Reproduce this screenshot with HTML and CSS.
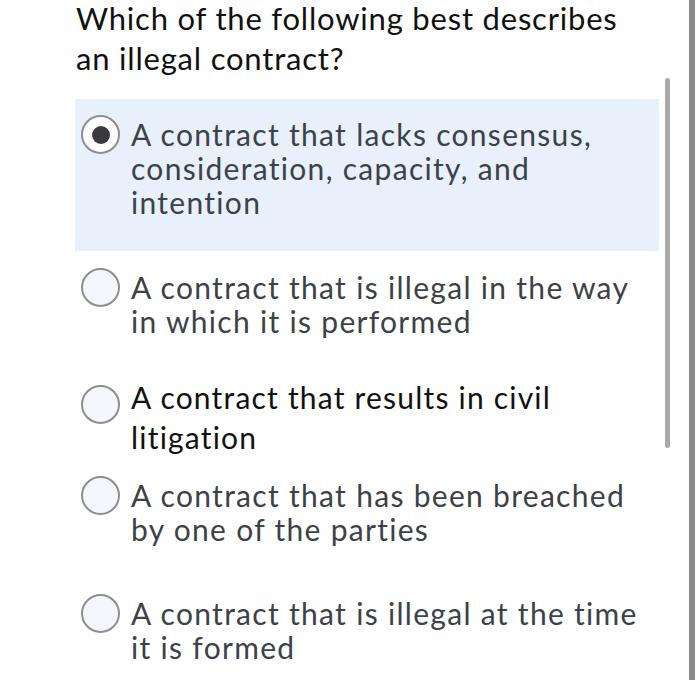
FILE: index.html
```html
<!DOCTYPE html>
<html lang="en">
<head>
<meta charset="utf-8">
<title>Question</title>
<link rel="stylesheet" href="styles.css">
</head>
<body>
<div class="frame">
  <div class="content">
    <h1 class="question">Which of the following best describes<br>an illegal contract?</h1>
    <div class="options">
      <div class="option option--selected">
        <span class="radio radio--checked"></span>
        <span class="label">A contract that lacks consensus,<br>consideration, capacity, and<br>intention</span>
      </div>
      <div class="option option--second">
        <span class="radio"></span>
        <span class="label">A contract that is illegal in the way<br>in which it is performed</span>
      </div>
      <div class="option option--third">
        <span class="radio radio--low"></span>
        <span class="label label--dark">A contract that results in civil<br>litigation</span>
      </div>
      <div class="option option--fourth">
        <span class="radio"></span>
        <span class="label">A contract that has been breached<br>by one of the parties</span>
      </div>
      <div class="option option--fifth">
        <span class="radio"></span>
        <span class="label">A contract that is illegal at the time<br>it is formed</span>
      </div>
    </div>
  </div>
  <div class="scroll-thumb"></div>
</div>
</body>
</html>
```

FILE: styles.css
```css
html, body {
  margin: 0;
  padding: 0;
  background: #ffffff;
}

.frame {
  position: relative;
  width: 689px;
  height: 680px;
  border-right: 6px solid #8a8a8a;
  overflow: hidden;
}

.content {
  padding-left: 75px;
  width: 584px;
}

.question {
  margin: -2px 0 0 1px;
  font-family: "Lato", "Liberation Sans", sans-serif;
  font-weight: 400;
  font-size: 31px;
  letter-spacing: 0.8px;
  line-height: 40px;
  color: #111111;
  white-space: nowrap;
}

.options {
  margin-top: 21px;
  display: flex;
  flex-direction: column;
}

.option {
  display: flex;
  align-items: flex-start;
  gap: 11px;
  padding: 18px 6px 0;
}

.option--selected {
  background: #e7f0fb;
  padding-bottom: 32px;
}

.option--second { margin-top: 1px; }
.option--third { margin-top: 21px; }
.option--fourth { margin-top: 3px; }
.option--fifth { margin-top: 32px; }

.radio {
  flex: none;
  box-sizing: border-box;
  width: 39px;
  height: 39px;
  margin-top: -2px;
  border: 2px solid #8e8e8e;
  border-radius: 50%;
  background: #f4f6fb;
  display: flex;
  align-items: center;
  justify-content: center;
}

.radio--checked {
  background: #ffffff;
}

.radio--checked::after {
  content: "";
  width: 18px;
  height: 18px;
  border-radius: 50%;
  background: #3a3a3c;
}

.radio--low {
  margin-top: 8px;
}

.label {
  font-family: "Lato", "Liberation Sans", sans-serif;
  font-size: 30px;
  letter-spacing: 1.3px;
  line-height: 34px;
  color: #3d4148;
  white-space: nowrap;
}

.label--dark {
  font-size: 30px;
  letter-spacing: 1.2px;
  line-height: 40px;
  color: #111111;
}

.scroll-thumb {
  position: absolute;
  left: 665px;
  top: 78px;
  width: 5px;
  height: 370px;
  border-radius: 3px;
  background: #a9a9a9;
}
```
